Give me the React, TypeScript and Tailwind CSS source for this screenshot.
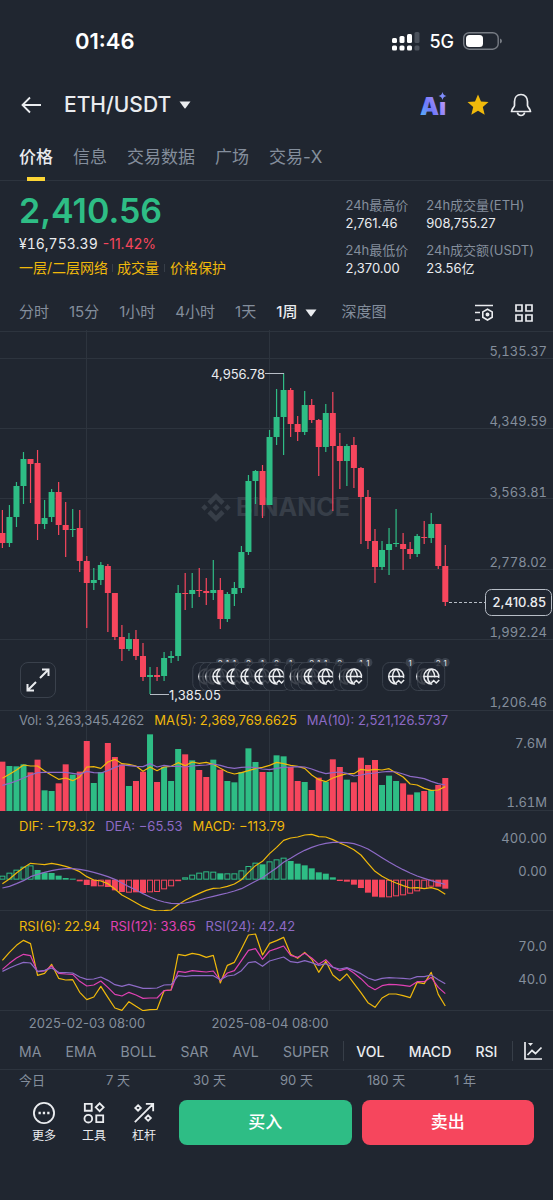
import type { ReactNode } from "react";

const GREEN = "#2ebd85";
const RED = "#f6465d";
const YELLOW = "#f0b90b";
const PURPLE = "#8d6ac6";
const PINK = "#e041b4";
const GRID = "#2d343e";
const MUTED = "#848e9c";
const BG = "#202630";

const STEP = 7.03;
const cx = (i: number) => 2.4 + i * STEP;

// [up, high, body top, body bottom, low]
const candles: [number, number, number, number, number][] = [
  [0, 180, 203, 213, 218], [1, 175, 187, 213, 217], [1, 152, 156, 187, 197], [1, 122, 129, 156, 174],
  [0, 129, 129, 134, 173], [0, 120, 133, 194, 210], [1, 170, 188, 194, 199], [1, 159, 162, 187, 192],
  [0, 152, 162, 195, 205], [0, 172, 195, 200, 227], [1, 179, 199, 200, 207], [0, 180, 198, 231, 242],
  [0, 226, 231, 253, 298], [1, 238, 250, 253, 260], [1, 232, 235, 250, 255], [0, 234, 236, 263, 302],
  [0, 263, 263, 307, 310], [0, 295, 307, 319, 331], [1, 303, 309, 319, 321], [0, 300, 309, 326, 330],
  [0, 313, 326, 347, 351], [1, 337, 345, 347, 364], [0, 337, 345, 347, 351], [1, 322, 328, 346, 351],
  [1, 321, 326, 328, 333], [1, 255, 263, 326, 331], [0, 243, 263, 264, 280], [1, 243, 260, 264, 278],
  [0, 238, 260, 261, 267], [0, 248, 261, 263, 275], [1, 230, 260, 263, 270], [0, 248, 260, 289, 299],
  [1, 262, 264, 289, 292], [1, 252, 258, 264, 276], [1, 216, 222, 258, 263], [1, 145, 151, 222, 225],
  [1, 140, 141, 151, 174], [0, 135, 141, 175, 188], [1, 100, 107, 175, 175], [1, 59, 87, 107, 115],
  [1, 43, 60, 87, 125], [0, 58, 60, 94, 107], [0, 86, 94, 102, 111], [1, 61, 75, 102, 105],
  [0, 69, 75, 90, 93], [0, 89, 90, 117, 146], [1, 74, 83, 117, 122], [0, 62, 83, 116, 181],
  [0, 103, 116, 131, 159], [1, 114, 116, 131, 156], [0, 107, 115, 138, 158], [0, 137, 138, 167, 214],
  [0, 160, 167, 211, 219], [0, 199, 211, 237, 253], [1, 211, 220, 237, 240], [1, 198, 214, 220, 245],
  [1, 179, 213, 214, 217], [0, 203, 214, 219, 240], [0, 212, 219, 224, 229], [1, 204, 206, 224, 227],
  [0, 191, 207, 208, 214], [1, 183, 194, 208, 213], [0, 194, 194, 236, 239], [0, 215, 236, 272, 276],
];

// Indicator series below are stored in thirds of a chart pixel.
const volume = [
  170, 183, 184, 178, 202, 164, 256, 258, 235, 178, 209, 200, 108, 234, 201, 114, 156, 178, 243, 228, 200, 88,
  231, 186, 228, 132, 148, 166, 195, 216, 164, 194, 228, 232, 201, 130, 171, 201, 201, 151, 154, 186, 228, 231,
  255, 218, 230, 163, 186, 224, 232, 158, 180, 165, 240, 212, 228, 235, 269, 262, 258, 255, 240, 219,
];
const ma5 = [
  220, 208, 195, 180, 183, 183, 198, 211, 223, 219, 227, 216, 186, 185, 190, 171, 163, 176, 178, 183, 199, 186,
  197, 186, 184, 173, 182, 171, 175, 172, 178, 190, 201, 207, 203, 197, 191, 187, 181, 172, 176, 181, 184, 190,
  210, 224, 230, 219, 212, 206, 206, 193, 196, 193, 195, 191, 204, 216, 237, 240, 250, 256, 255, 245,
];
const ma10 = [
  241, 235, 228, 219, 210, 203, 202, 202, 202, 202, 205, 208, 199, 203, 204, 197, 187, 180, 182, 184, 185, 176,
  186, 181, 184, 184, 186, 183, 181, 180, 177, 181, 187, 190, 187, 186, 188, 192, 194, 190, 187, 186, 185, 186,
  192, 200, 206, 203, 201, 205, 213, 210, 206, 204, 201, 199, 201, 207, 214, 217, 221, 229, 236, 240,
];
const macd = [
  197, 188, 179, 170, 166, 180, 188, 189, 197, 204, 206, 214, 225, 229, 229, 231, 241, 246, 248, 247, 249, 247,
  246, 238, 229, 213, 202, 194, 188, 184, 185, 190, 190, 190, 181, 168, 158, 163, 154, 148, 143, 153, 161, 166,
  175, 187, 191, 202, 213, 215, 224, 234, 248, 260, 262, 262, 259, 256, 251, 244, 237, 230, 230, 236,
];
const hollow = new Set([
  0, 1, 2, 3, 4, 14, 18, 21, 22, 23, 24, 25, 26, 27, 28, 29, 30, 32, 33, 34, 35, 36, 38, 39, 40, 55, 56, 57, 58,
  59, 60, 61,
]);
const dif = [
  221, 207, 189, 173, 160, 162, 164, 160, 164, 169, 176, 185, 200, 210, 213, 221, 237, 255, 266, 278, 290, 298,
  303, 302, 300, 284, 271, 260, 250, 241, 235, 234, 229, 222, 209, 187, 167, 154, 131, 112, 91, 84, 81, 75, 73,
  80, 81, 89, 99, 108, 119, 135, 160, 184, 199, 210, 219, 227, 234, 233, 236, 233, 239, 253,
];
const dea = [
  234, 229, 221, 212, 200, 193, 187, 182, 178, 176, 176, 178, 182, 187, 193, 200, 208, 219, 230, 240, 251, 261,
  270, 276, 280, 281, 279, 275, 270, 264, 259, 254, 249, 243, 236, 225, 214, 203, 188, 174, 157, 145, 132, 121,
  112, 105, 100, 97, 97, 98, 101, 108, 117, 130, 143, 156, 168, 179, 189, 198, 205, 212, 218, 223,
];
const rsi6 = [
  454, 430, 409, 394, 404, 499, 493, 466, 508, 513, 512, 550, 572, 564, 532, 565, 597, 604, 578, 592, 605, 602,
  601, 545, 543, 436, 440, 433, 437, 445, 439, 522, 469, 460, 420, 378, 375, 438, 403, 395, 385, 436, 448, 430,
  451, 490, 457, 498, 515, 495, 523, 551, 581, 595, 567, 555, 555, 560, 566, 520, 524, 490, 556, 591,
];
const rsi12 = [
  481, 463, 447, 436, 440, 488, 486, 471, 493, 495, 496, 517, 531, 528, 516, 535, 556, 561, 550, 558, 568, 567,
  567, 545, 543, 487, 490, 485, 487, 489, 486, 515, 492, 485, 455, 424, 419, 451, 426, 419, 411, 439, 445, 433,
  447, 466, 452, 474, 485, 478, 492, 509, 530, 542, 530, 526, 527, 529, 532, 518, 518, 505, 535, 554,
];
const rsi24 = [
  487, 477, 468, 460, 462, 487, 484, 477, 490, 491, 492, 504, 511, 510, 504, 514, 527, 532, 526, 532, 538, 538,
  537, 528, 527, 500, 502, 500, 500, 500, 500, 512, 501, 498, 485, 461, 458, 472, 456, 450, 444, 458, 461, 455,
  461, 469, 464, 475, 480, 476, 484, 494, 507, 514, 508, 506, 507, 508, 510, 503, 503, 498, 512, 524,
];

// [candle index, number of events]
const events = [
  [29, 2], [30, 1], [31, 1], [33, 2], [35, 1], [37, 2], [39, 1], [42, 2],
  [43, 1], [44, 1], [46, 2], [49, 1], [50, 1], [56, 1], [60, 2], [61, 1],
];

const tabs = ["价格", "信息", "交易数据", "广场", "交易-X"];
const frames = ["分时", "15分", "1小时", "4小时", "1天"];
const overlays = ["MA", "EMA", "BOLL", "SAR", "AVL", "SUPER"];
const activeIndicators = ["VOL", "MACD", "RSI"];
const ranges = ["今日", "7 天", "30 天", "90 天", "180 天", "1 年"];

function Line({ values, offset, color }: { values: number[]; offset: number; color: string }) {
  const points = values.map((v, i) => `${cx(i)},${v / 3 - offset}`).join(" ");
  return <polyline points={points} fill="none" stroke={color} strokeWidth="1.2" strokeLinejoin="round" />;
}

function Axis({ labels }: { labels: [string, number][] }) {
  return (
    <g fill={MUTED} fontSize="13" textAnchor="end" className="tabular-nums">
      {labels.map(([text, y]) => (
        <text key={text} x="547" y={y}>
          {text}
        </text>
      ))}
    </g>
  );
}

type PaneProps = { height: number; legend?: [string, string][]; legendClass?: string; children: ReactNode };

function Pane({ height, legend = [], legendClass = "top-[5px]", children }: PaneProps) {
  return (
    <div className="relative">
      <svg viewBox={`0 0 553 ${height}`} className="block w-full">
        <path d={`M86.5 0V${height}M269.5 0V${height}M0 ${height - 0.5}H553`} stroke={GRID} />
        {children}
      </svg>
      <div className={`absolute left-[19px] flex gap-[10px] text-[13px] leading-5 ${legendClass}`}>
        {legend.map(([text, color]) => (
          <span key={text} style={{ color }}>
            {text}
          </span>
        ))}
      </div>
    </div>
  );
}

function EventMarker({ x, count }: { x: number; count: number }) {
  return (
    <g transform={`translate(${x} 346.5)`}>
      <rect x="-13.5" y="-14" width="27" height="28" rx="7" fill={BG} fillOpacity="0.85" stroke="#3a414c" />
      <g fill="none" stroke="#eaecef" strokeWidth="1.5">
        <path d="M1 7.4A7.5 7.5 0 1 1 7.4 1.5M-7.5 0H7.5M0-7.5C-4.6-3.5-4.6 3.5-.5 7.4M0-7.5C2.6-5 3.6-2.5 3.4 1" />
        <path d="M0 6.5L2.5 4L5 6.5L8 3.5" />
      </g>
      <circle cx="14" cy="-14" r="4.5" fill="#3a414c" />
      <text x="14" y="-11" fontSize="8" fill="#eaecef" textAnchor="middle">
        {count}
      </text>
    </g>
  );
}

function PriceChart() {
  return (
    <div className="relative">
      <Pane height={381}>
        <path d="M0 1.5H553M0 28.5H553M0 98.5H553M0 168.5H553M0 239.5H553M0 309.5H553" stroke={GRID} />
        <g fill="#373e48">
          <path d="M216 163l8.600 8.600-3.300 3.300-5.300-5.300-5.300 5.300-3.300-3.300zM216 192l8.600-8.600-3.300-3.300-5.300 5.300-5.300-5.300-3.300 3.300z" />
          <path d="M216 174l3.500 3.500-3.500 3.500-3.500-3.500zM204.500 174.300l3.200 3.200-3.200 3.200-3.200-3.200zM227.500 174.300l3.200 3.200-3.200 3.200-3.200-3.200z" />
          <text x="236" y="186" fontSize="25" fontWeight="700">
            BINANCE
          </text>
        </g>
        {candles.map(([up, high, top, bottom, low], i) => (
          <g key={i} fill={up ? GREEN : RED}>
            <rect x={cx(i) - 0.6} y={high} width="1.2" height={low - high} />
            <rect x={cx(i) - 3} y={top} width="6" height={Math.max(bottom - top, 1)} />
          </g>
        ))}
        <Axis
          labels={[
            ["5,135.37", 26],
            ["4,349.59", 96],
            ["3,563.81", 167],
            ["2,778.02", 237],
            ["1,992.24", 307],
            ["1,206.46", 377],
          ]}
        />
        {events.map(([i, count]) => (
          <EventMarker key={i} x={cx(i)} count={count} />
        ))}
        <path d="M265 43.500H284M150 364.500H169" stroke="#b7bdc6" />
        <g fill="#eaecef" fontSize="13">
          <text x="265" y="49" textAnchor="end">
            4,956.78
          </text>
          <text x="169" y="370">
            1,385.05
          </text>
        </g>
        <path d="M449 272.500H485" stroke="#b7bdc6" strokeDasharray="3 2" />
        <rect x="485.500" y="259.500" width="66" height="26" rx="6" fill={BG} stroke="#b7bdc6" />
        <text x="546" y="277" fill="#eaecef" fontSize="13" fontWeight="500" textAnchor="end">
          2,410.85
        </text>
      </Pane>
      <button
        aria-label="全屏"
        className="absolute bottom-[13px] left-5 flex size-9 items-center justify-center rounded-lg border border-[#3a414c]"
      >
        <svg viewBox="0 0 24 24" className="size-6" fill="none" stroke="#eaecef" strokeWidth="2">
          <path d="M14 10L22.500 1.500M16 1.500h6.500V8M10 14L1.500 22.500M1.500 16v6.500H8" />
        </svg>
      </button>
    </div>
  );
}

function Caret() {
  return (
    <svg viewBox="0 0 12 8" className="h-2 w-3 fill-current">
      <path d="M.5 .5h11L6.500 7.200Q6 7.800 5.500 7.200z" />
    </svg>
  );
}

function StatusBar() {
  return (
    <div className="flex h-[82px] items-center pr-[51px] pl-[75px] text-white">
      <span className="flex-1 text-[22px] font-semibold">01:46</span>
      <svg viewBox="0 0 28 20" className="mr-[9px] h-5 w-7 fill-current">
        <rect x="0" y="7" width="5" height="5" rx="1.500" />
        <rect x="7.500" y="5" width="5" height="7" rx="1.500" />
        <rect x="15" y="3" width="5" height="9" rx="1.500" />
        <rect x="22.500" y="1" width="5" height="11" rx="1.500" fill="#4b515b" />
        <rect x="0" y="14.500" width="5" height="5" rx="1.500" />
        <rect x="7.500" y="14.500" width="5" height="5" rx="1.500" />
        <rect x="15" y="14.500" width="5" height="5" rx="1.500" />
        <rect x="22.500" y="14.500" width="5" height="5" rx="1.500" fill="#4b515b" />
      </svg>
      <span className="mr-[9px] text-[18px] font-medium">5G</span>
      <svg viewBox="0 0 39 20" className="h-5 w-[39px]">
        <rect x="0.700" y="1.700" width="34.500" height="16.500" rx="5.500" fill="none" stroke="#777c84" strokeWidth="1.400" />
        <rect x="3" y="4" width="17" height="12" rx="3.500" fill="#fff" />
        <path d="M37 7.500q2 .8 2 2.500t-2 2.500z" fill="#777c84" />
      </svg>
    </div>
  );
}

function Header() {
  return (
    <header className="flex h-[46px] items-center pr-5 pl-5">
      <button aria-label="返回" className="mr-[22px]">
        <svg viewBox="0 0 22 22" className="size-[22px]" fill="none" stroke="#eaecef" strokeWidth="1.800">
          <path d="M21 11H3M10 3.500L2.500 11l7.500 7.500" />
        </svg>
      </button>
      <button className="flex items-center gap-2 text-[21px] font-medium">
        ETH/USDT
        <Caret />
      </button>
      <div className="ml-auto flex items-center gap-5">
        <button aria-label="Ai">
          <svg viewBox="0 -8 27 40" className="h-10 w-[27px]">
            <defs>
              <linearGradient id="ai" x1="0" y1="1" x2="1" y2="0.300">
                <stop offset="0" stopColor="#4fc3f7" />
                <stop offset="0.450" stopColor="#7078fa" />
                <stop offset="1" stopColor="#c39bfa" />
              </linearGradient>
            </defs>
            <text x="0" y="22" fontSize="24" fontWeight="900" fill="url(#ai)">
              Aı
            </text>
            <path d="M22.500 -1q.7 3.300 4 4-3.300.7-4 4-.7-3.300-4-4 3.300-.7 4-4z" fill="#7f8cfb" />
          </svg>
        </button>
        <button aria-label="自选">
          <svg viewBox="0 0 22 22" className="size-[22px]" fill={YELLOW}>
            <path d="M11 .5l3 6.900 7.500.6-5.700 5 1.900 7.700L11 16.700l-6.700 4 1.900-7.700L.5 8 8 7.400z" />
          </svg>
        </button>
        <button aria-label="提醒">
          <svg viewBox="0 0 24 24" className="size-6" fill="none" stroke="#eaecef" strokeWidth="1.700">
            <path
              d="M12 1.500C8 1.500 5.500 4.500 5.500 8.500V12.500C5.500 14.500 2.500 15.500 2.500 18.500H21.500C21.500 15.500 18.500 14.500 18.500 12.500V8.500C18.500 4.500 16 1.500 12 1.500z"
              strokeLinejoin="round"
            />
            <path d="M8.500 19.500a3.500 3 0 0 0 7 0" />
          </svg>
        </button>
      </div>
    </header>
  );
}

function Stat({ label, value }: { label: string; value: string }) {
  return (
    <div className="text-[13px] leading-[18px]">
      <dt className="text-[#848e9c]">{label}</dt>
      <dd>{value}</dd>
    </div>
  );
}

function Summary() {
  return (
    <section className="flex h-[114px] justify-between pr-[19px] pl-[19px]">
      <div className="pt-3">
        <div className="text-[34px] leading-9 font-semibold text-[#2ebd85]">2,410.56</div>
        <div className="mt-[5px] flex gap-[5px] text-[14px] leading-5">
          <span className="tabular-nums">¥16,753.39</span>
          <span className="text-[#f6465d]">-11.42%</span>
        </div>
        <div className="mt-1 flex items-center text-[14px] leading-5 text-[#f0b90b]">
          <a href="#network">一层/二层网络</a>
          <span className="mx-1 h-2 w-px bg-[#373e48]" />
          <a href="#volume">成交量</a>
          <span className="mx-[5px] h-2 w-px bg-[#373e48]" />
          <a href="#protect">价格保护</a>
        </div>
      </div>
      <dl className="grid grid-cols-[auto_auto] content-start gap-x-[18px] gap-y-[9px] pt-[15px]">
        <Stat label="24h最高价" value="2,761.46" />
        <Stat label="24h成交量(ETH)" value="908,755.27" />
        <Stat label="24h最低价" value="2,370.00" />
        <Stat label="24h成交额(USDT)" value="23.56亿" />
      </dl>
    </section>
  );
}

function NavItem({ label, children }: { label: string; children: ReactNode }) {
  return (
    <button className="flex w-[50px] flex-col items-center gap-1 pt-0.5 text-[12px] leading-4">
      <svg viewBox="0 0 24 24" className="size-[22px]" fill="none" stroke="#eaecef" strokeWidth="2">
        {children}
      </svg>
      {label}
    </button>
  );
}

export default function App() {
  return (
    <div className="min-h-screen bg-[#202630] font-['Inter','Noto_Sans_CJK_SC',sans-serif] text-[#eaecef]">
      <StatusBar />
      <Header />
      <nav className="flex h-[53px] gap-5 border-b border-[#2d343e] pl-[19px] text-[17px] text-[#848e9c]">
        {tabs.map((tab, i) => (
          <button key={tab} className={i === 0 ? "relative pt-2 font-medium text-[#eaecef]" : "pt-2"}>
            {tab}
            {i === 0 && <span className="absolute inset-x-2 -bottom-px h-1 bg-[#fcd535]" />}
          </button>
        ))}
      </nav>
      <Summary />
      <div className="flex h-[35px] items-center gap-5 pr-[19px] pl-[19px] text-[15px] text-[#848e9c]">
        {frames.map((frame) => (
          <button key={frame}>{frame}</button>
        ))}
        <button className="flex items-center gap-2 font-medium text-[#eaecef]">
          1周
          <Caret />
        </button>
        <button className="ml-1">深度图</button>
        <div className="ml-auto flex gap-5">
          <button aria-label="图表设置">
            <svg viewBox="0 0 20 20" className="size-5" fill="none" stroke="#eaecef" strokeWidth="1.600">
              <path d="M1 2.500H19M1 9.500H6M1 17H6" />
              <path d="M13.500 6.200l4.700 2.700v5.400l-4.700 2.700-4.700-2.700V8.900z" />
              <circle cx="13.500" cy="11.600" r="1.200" fill="#eaecef" />
            </svg>
          </button>
          <button aria-label="布局">
            <svg viewBox="0 0 20 20" className="size-5" fill="none" stroke="#eaecef" strokeWidth="1.700">
              <path d="M2 2h6v6H2zM12 2h6v6h-6zM2 12h6v6H2zM12 12h6v6h-6z" />
            </svg>
          </button>
        </div>
      </div>

      <PriceChart />
      <Pane
        height={100}
        legendClass="-top-px"
        legend={[
          ["Vol: 3,263,345.4262", MUTED],
          ["MA(5): 2,369,769.6625", YELLOW],
          ["MA(10): 2,521,126.5737", PURPLE],
        ]}
      >
        {volume.map((v, i) => (
          <rect key={i} x={cx(i) - 3} y={v / 3 - 6} width="6" height={(318 - v) / 3} fill={candles[i][0] ? GREEN : RED} />
        ))}
        <Line values={ma5} offset={6} color={YELLOW} />
        <Line values={ma10} offset={6} color={PURPLE} />
        <Axis labels={[["7.6M", 37], ["1.61M", 96]]} />
      </Pane>
      <Pane
        height={100}
        legend={[
          ["DIF: −179.32", YELLOW],
          ["DEA: −65.53", PURPLE],
          ["MACD: −113.79", YELLOW],
        ]}
      >
        {macd.map((v, i) => {
          const color = v < 209 ? GREEN : RED;
          const inset = hollow.has(i) ? 0.5 : 0;
          return (
            <rect
              key={i}
              x={cx(i) - 3 + inset}
              y={Math.min(v, 209) / 3 - 1 + inset}
              width={6 - inset * 2}
              height={Math.max(Math.abs(v - 209) / 3 - inset * 2, 0.5)}
              fill={inset ? "none" : color}
              stroke={inset ? color : "none"}
            />
          );
        })}
        <Line values={dif} offset={1} color={YELLOW} />
        <Line values={dea} offset={1} color={PURPLE} />
        <Axis labels={[["400.00", 32], ["0.00", 65]]} />
      </Pane>
      <Pane
        height={100}
        legend={[
          ["RSI(6): 22.94", YELLOW],
          ["RSI(12): 33.65", PINK],
          ["RSI(24): 42.42", PURPLE],
        ]}
      >
        <Line values={rsi6} offset={102} color={YELLOW} />
        <Line values={rsi12} offset={102} color={PINK} />
        <Line values={rsi24} offset={102} color={PURPLE} />
        <Axis labels={[["70.0", 40], ["40.0", 73]]} />
      </Pane>
      <svg viewBox="0 0 553 24" className="block w-full">
        <g fill={MUTED} fontSize="13" textAnchor="middle">
          <text x="87" y="17">
            2025-02-03 08:00
          </text>
          <text x="270" y="17">
            2025-08-04 08:00
          </text>
        </g>
      </svg>

      <div className="flex h-[35px] items-center justify-between border-b border-[#2d343e] pr-[10px] pb-0.5 pl-[19px] text-[14px] text-[#848e9c]">
        {overlays.map((name) => (
          <button key={name}>{name}</button>
        ))}
        <span className="-mr-3 -ml-2.5 h-5 w-px bg-[#373e48]" />
        {activeIndicators.map((name) => (
          <button key={name} className="font-medium text-[#eaecef]">
            {name}
          </button>
        ))}
        <span className="-mr-3.5 -ml-2.5 h-5 w-px bg-[#373e48]" />
        <button aria-label="指标">
          <svg viewBox="0 0 20 20" className="size-5" fill="none" stroke="#eaecef" strokeWidth="1.700">
            <path d="M2 1V18H19M4.500 14L9 9.500L12.500 12.500L18.500 6.500" />
            <path d="M5 2h5L7.500 5z" fill="#eaecef" stroke="none" />
          </svg>
        </button>
      </div>
      <div className="grid h-[22px] grid-cols-6 items-center pr-3 pl-[19px] text-[13px] text-[#848e9c]">
        {ranges.map((range) => (
          <button key={range} className="text-left">
            {range}
          </button>
        ))}
      </div>
      <footer className="flex items-start gap-[10px] px-[19px] pt-2">
        <div className="flex">
          <NavItem label="更多">
            <circle cx="12" cy="12" r="11" />
            <path d="M6 12h2.500M10.700 12h2.500M15.500 12h2.500" strokeWidth="2.500" />
          </NavItem>
          <NavItem label="工具">
            <path d="M2 2h7.500v7.500H2zM14.500 14.500H22V22h-7.500zM18.200 1.500l4.300 4.300-4.300 4.300-4.300-4.300z" />
            <circle cx="5.800" cy="18.200" r="4.200" />
          </NavItem>
          <NavItem label="杠杆">
            <path d="M2 22L22 2M14 2h8v8M5.500 3.500L8.500 6.500L5.500 9.500L2.500 6.500zM16.500 14.500L19.500 17.500L16.500 20.500L13.500 17.500z" />
          </NavItem>
        </div>
        <button className="h-[45px] flex-1 rounded-lg bg-[#2ebd85] text-[17px] font-medium text-white">买入</button>
        <button className="h-[45px] flex-1 rounded-lg bg-[#f6465d] text-[17px] font-medium text-white">卖出</button>
      </footer>
    </div>
  );
}
